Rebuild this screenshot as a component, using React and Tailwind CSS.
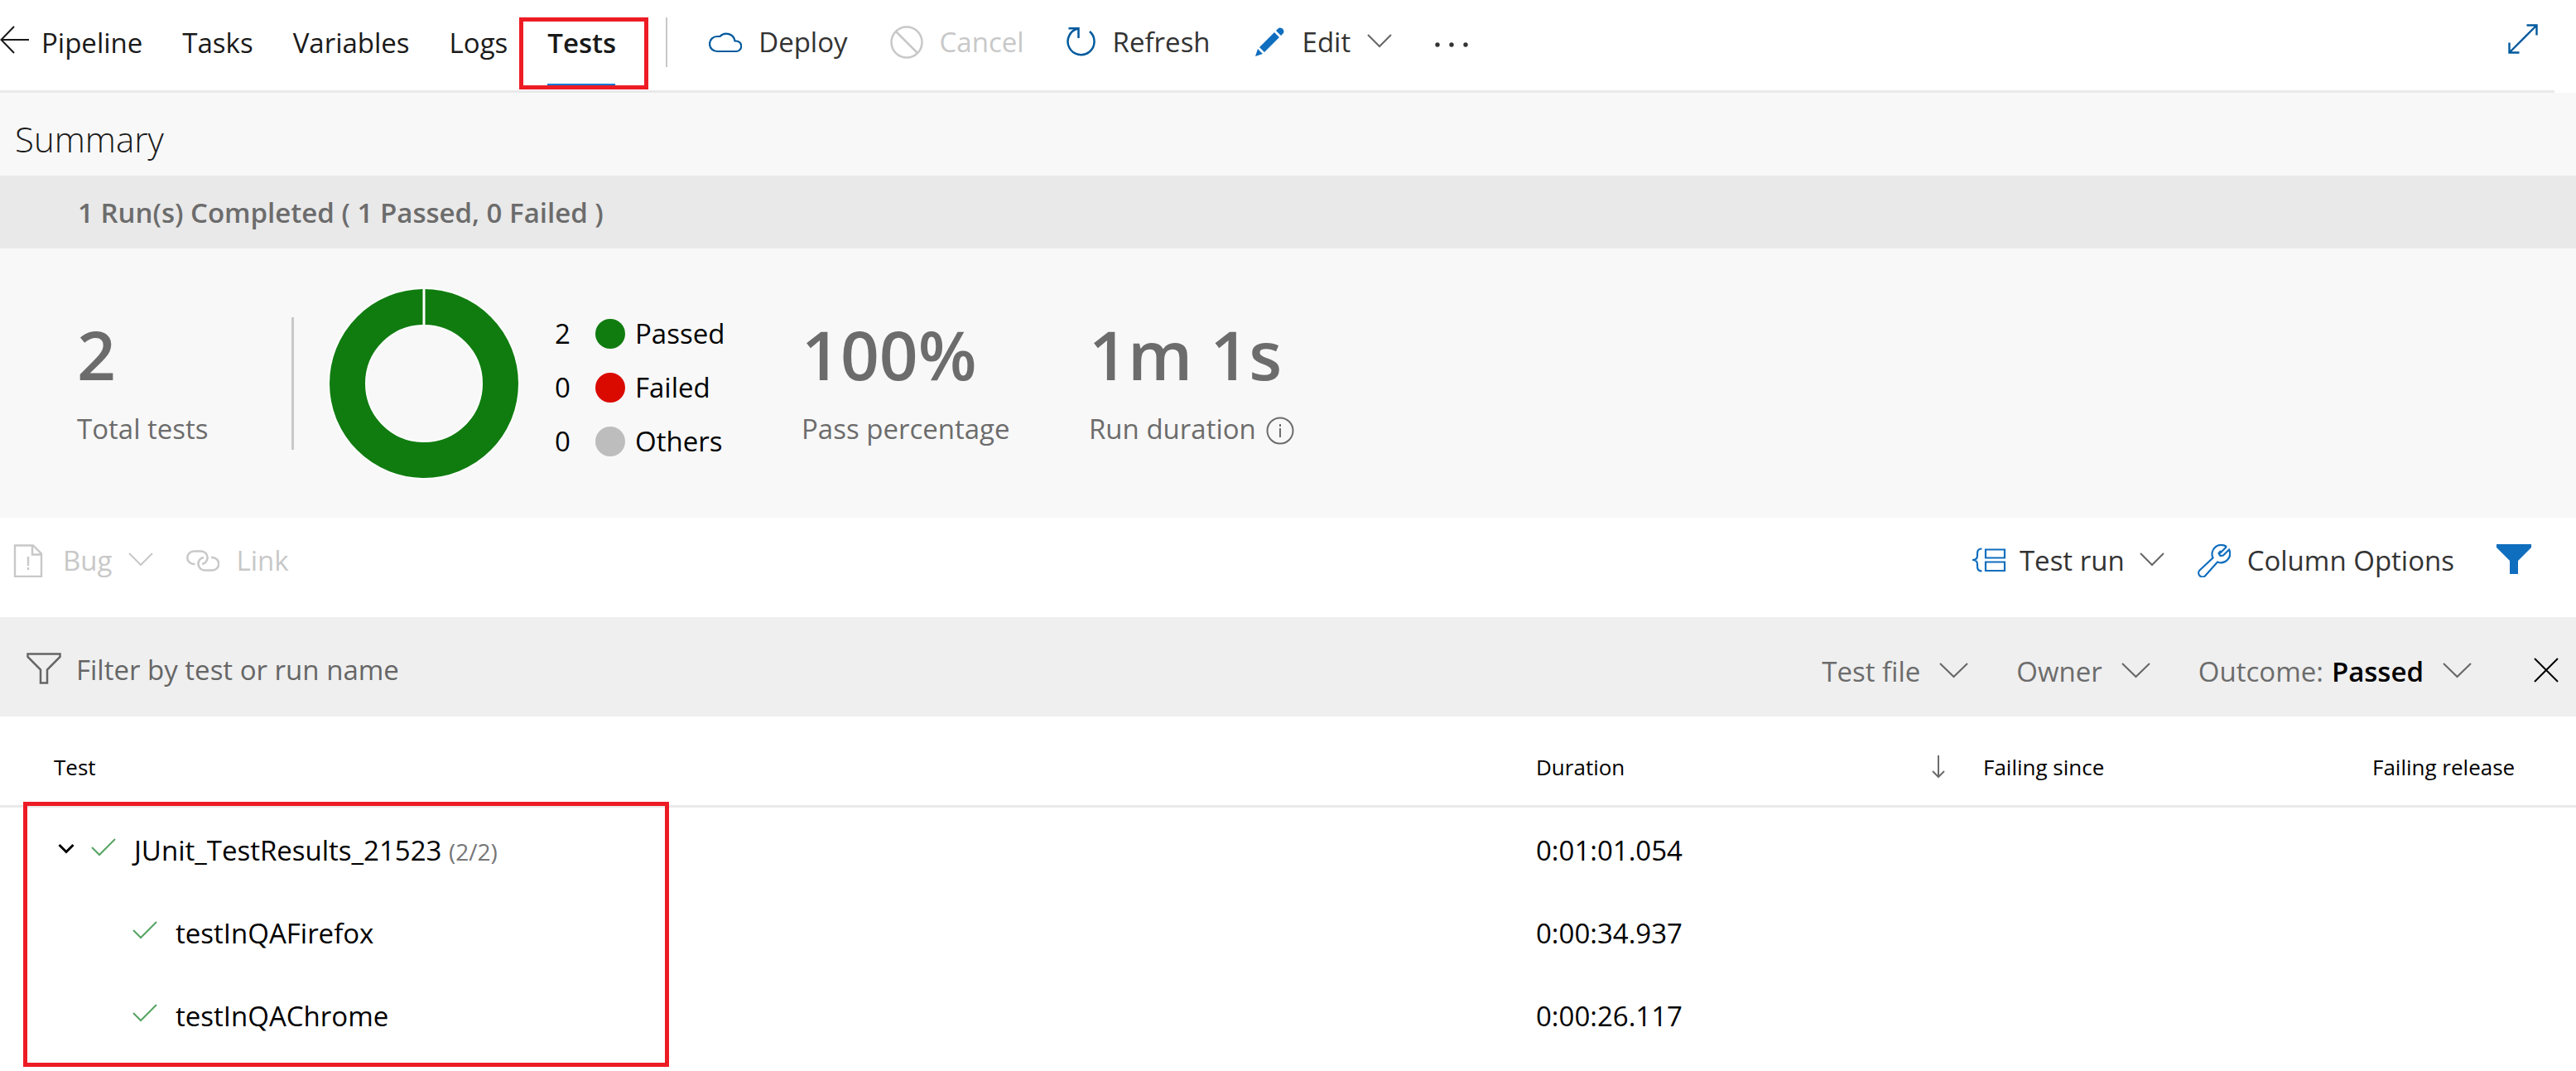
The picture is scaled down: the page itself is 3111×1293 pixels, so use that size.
function Icon({ w = 40, h = 40, sw = 2, className = "", children, fill = "none" }) {
  return (
    <svg
      width={w}
      height={h}
      viewBox={`0 0 ${w} ${h}`}
      fill={fill}
      stroke={fill === "none" ? "currentColor" : "none"}
      strokeWidth={sw}
      className={`shrink-0 ${className}`}
      aria-hidden="true"
    >
      {children}
    </svg>
  );
}

const Chevron = ({ className = "" }) => (
  <Icon w={30} h={18} sw={2} className={className}>
    <path d="M1 2 15 16 29 2" />
  </Icon>
);

const WideChevron = ({ className = "" }) => (
  <Icon w={35} h={20} sw={2} className={className}>
    <path d="M1 2 17.500 18 34 2" />
  </Icon>
);

const Check = () => (
  <Icon w={30} h={24} sw={2} className="mb-2 text-[#55a362]">
    <path d="M1 12 10 21 29 2" />
  </Icon>
);

const navLinks = ["Pipeline", "Tasks", "Variables", "Logs"];

function Command({ icon, label, tone = "text-[#333333]", menu = false, disabled = false }) {
  return (
    <button type="button" disabled={disabled} className={`flex items-center gap-5 ${tone}`}>
      {icon}
      {label}
      {menu && <Chevron className={disabled ? "mb-1" : "mb-1 text-[#666666]"} />}
    </button>
  );
}

function TopBar() {
  return (
    <header className="mr-[26px] flex items-center justify-between border-b-3 border-[#e9e9e9] pb-[7px]">
      <div className="flex h-[102px] items-center">
        <nav className="flex items-center gap-12 pt-0.5 text-[#1a1a1a]">
          {navLinks.map((name, i) => (
            <a key={name} href={`#${name.toLowerCase()}`} className="flex items-center gap-[14px]">
              {i === 0 && (
                <Icon w={36} h={36} className="mb-2">
                  <path d="M17 2 1.500 18 17 34M1.500 18H35" />
                </Icon>
              )}
              {name}
            </a>
          ))}
          <a href="#tests" aria-current="page" className="relative font-semibold">
            Tests
            <span className="absolute -bottom-8 left-0 h-[5px] w-[82px] bg-[#0078d4]" />
            <span className="absolute -top-[9px] -right-[39px] -bottom-[34px] -left-[34px] border-5 border-[#ed1c24]" />
          </a>
        </nav>
        <div className="ml-[60px] h-[60px] w-0.5 bg-[#c8c8c8]" />
        <div className="ml-[50px] flex items-center gap-[51px]">
          <Command
            label="Deploy"
            icon={
              <Icon sw={2.2} className="text-[#005a9e]">
                <path d="M10 31a9 9 0 0 1 0-18h3.500A10.500 10.500 0 0 1 31.500 18.500h1.500a6.250 6.250 0 0 1 0 12.500Z" />
              </Icon>
            }
          />
          <Command
            label="Cancel"
            tone="text-[#c8c8c8]"
            disabled
            icon={
              <Icon sw={2.5}>
                <circle cx="20" cy="20" r="18.500" />
                <path d="M7 7 33 33" />
              </Icon>
            }
          />
          <Command
            label="Refresh"
            icon={
              <Icon sw={2.5} className="-mr-1 text-[#005a9e]">
                <path d="M13 3.800A16 16 0 1 0 28 7M2.500 3.200H14.500V15" />
              </Icon>
            }
          />
          <Command
            label="Edit"
            menu
            icon={
              <Icon fill="#106ebe">
                <path d="M3 37 6 28 12 34ZM8 26 26 8 32 14 14 32ZM28 6 30.500 3.500A3.500 3.500 0 0 1 33 2.500 5 5 0 0 1 37.500 7 3.500 3.500 0 0 1 36.500 9.500L34 12Z" />
              </Icon>
            }
          />
          <button type="button" aria-label="More commands" className="text-[#333333]">
            <Icon w={42} h={10} fill="currentColor" className="mt-1">
              <circle cx="4" cy="6" r="2.700" />
              <circle cx="21" cy="6" r="2.700" />
              <circle cx="38" cy="6" r="2.700" />
            </Icon>
          </button>
        </div>
      </div>
      <button type="button" aria-label="Full screen" className="mr-5 text-[#005a9e]">
        <Icon w={36} h={36} sw={2.4} className="mb-2">
          <path d="M2 34 34 2M22.500 1.500H34.500V13.500M1.500 22.500V34.500H13.500" />
        </Icon>
      </button>
    </header>
  );
}

function Metric({ value, label, children, className = "" }) {
  return (
    <div className={`flex flex-col gap-4 pb-1.5 text-[#6c6c6c] ${className}`}>
      <div className="text-[82px] leading-[100px] font-semibold">{value}</div>
      <div className="flex items-center gap-3 leading-[50px]">
        {label}
        {children}
      </div>
    </div>
  );
}

const legend = [
  { count: 2, label: "Passed", dot: "bg-[#107c10]" },
  { count: 0, label: "Failed", dot: "bg-[#da0a00]" },
  { count: 0, label: "Others", dot: "bg-[#bdbdbd]" },
];

function Summary() {
  return (
    <section className="bg-[#f8f8f8]">
      <h1 className="flex h-[100px] items-center pt-3 pl-[18px] text-[42px] font-light text-[#1a1a1a]">Summary</h1>
      <p className="flex h-[88px] items-center bg-[#e9e9e9] pt-0.5 pl-[94px] font-semibold text-[#6c6c6c]">
        1 Run(s) Completed ( 1 Passed, 0 Failed )
      </p>
      <div className="flex h-[325px] items-center pl-[93px]">
        <Metric value="2" label="Total tests" className="w-[259px]" />
        <div className="h-40 w-[3px] bg-[#c8c8c8]" />
        <svg width="232" height="232" viewBox="0 0 232 232" className="ml-[41px] shrink-0" role="img" aria-label="2 passed">
          <circle cx="116" cy="116" r="92.500" fill="none" stroke="#ffffff" strokeWidth="47" />
          <circle cx="116" cy="116" r="92.500" fill="none" stroke="#107c10" strokeWidth="43" />
          <path d="M116 0V48" stroke="#ffffff" strokeWidth="3" />
        </svg>
        <ul className="ml-[42px] w-[298px] pt-2.5 text-black">
          {legend.map((item) => (
            <li key={item.label} className="flex h-[65px] items-center">
              <span className="w-[49px]">{item.count}</span>
              <span className={`mr-3 size-9 rounded-full ${item.dot}`} />
              {item.label}
            </li>
          ))}
        </ul>
        <Metric value="100%" label="Pass percentage" className="w-[347px]" />
        <Metric value="1m 1s" label="Run duration">
          <Icon w={34} h={34} className="mt-1">
            <circle cx="17" cy="17" r="15.500" />
            <path d="M17 14V25M17 9V12" />
          </Icon>
        </Metric>
      </div>
    </section>
  );
}

function Picker({ prefix, value, name, tone = "", pad = "pr-[58px]", arrow: Arrow = WideChevron, className = "" }) {
  return (
    <label className={`flex items-center ${className}`}>
      {prefix && <span className="mr-2.5">{prefix}</span>}
      <span className="grid items-center">
        <select
          aria-label={name}
          className={`col-start-1 row-start-1 field-sizing-content appearance-none bg-transparent outline-none ${pad} ${tone}`}
        >
          <option>{value}</option>
        </select>
        <Arrow className="pointer-events-none col-start-1 row-start-1 mb-1 justify-self-end text-[#666666]" />
      </span>
    </label>
  );
}

function Toolbar() {
  return (
    <div className="flex h-[120px] items-center justify-between pr-[54px] pb-4 pl-4">
      <div className="flex items-center gap-10">
        <Command
          label="Bug"
          menu
          disabled
          tone="text-[#c8c8c8]"
          icon={
            <Icon sw={2.4}>
              <path d="M2 1.500H24L34 11.500V39H2ZM23 1.500V12.500H34M18 15V26M18 28V31" />
            </Icon>
          }
        />
        <Command
          label="Link"
          disabled
          tone="text-[#c8c8c8]"
          icon={
            <Icon sw={2.5}>
              <path d="M10.500 24H9A7.600 7.600 0 0 1 9 8.500H18A7.800 7.800 0 0 1 19 24M30 16H31.500A7.600 7.600 0 0 1 31.500 31.500H22A7.800 7.800 0 0 1 21 16" />
            </Icon>
          }
        />
      </div>
      <div className="flex items-center text-[#333333]">
        <Icon w={42} sw={2.2} className="mr-4 text-[#106ebe]">
          <path d="M12.500 5.500C8 5.500 7 8 7 11V14C7 17 5 19 1 19C5 19 7 21 7 24V27C7 30 8 32.500 12.500 32.500M17 6.500H40V16.500H17ZM17 21.500H40V32H17Z" />
        </Icon>
        <Picker value="Test run" name="Group by" pad="pr-12" arrow={Chevron} className="mr-10" />
        <Command
          label="Column Options"
          icon={
            <Icon sw={2.2} className="text-[#106ebe]">
              <path d="M35 3A11 11 0 0 0 18.500 16.500L2.500 31.500A4.700 4.700 0 0 0 9.300 38L24 21.500A11 11 0 0 0 38 6.500L31 13.500 27.500 14 25.500 11 28 8 M35 3 27 11" />
            </Icon>
          }
        />
        <button type="button" aria-label="Toggle filter" className="ml-[51px] text-[#106ebe]">
          <Icon w={42} h={36} fill="currentColor" className="mb-1">
            <path d="M0 0H42V4L26 20V36H16V20L0 4Z" />
          </Icon>
        </button>
      </div>
    </div>
  );
}

function FilterBar() {
  return (
    <div className="flex h-[120px] items-center bg-[#efefef] pt-2 pr-[21px] pl-8 text-[#6c6c6c]">
      <label className="flex flex-1 items-center gap-[18px]">
        <Icon w={42} h={38} sw={2.5} className="mb-1 text-[#666666]">
          <path d="M1.500 1.500H40.500V5L25 20.500V36.500H17V20.500L1.500 5Z" />
        </Icon>
        <input
          type="text"
          aria-label="Filter by test or run name"
          placeholder="Filter by test or run name"
          className="min-w-0 flex-1 bg-transparent outline-none placeholder:text-[#666666]"
        />
      </label>
      <div className="flex items-center gap-[58px] pt-1">
        <Picker value="Test file" name="Test file" />
        <Picker value="Owner" name="Owner" />
        <Picker prefix="Outcome:" value="Passed" name="Outcome" tone="font-semibold text-black" />
      </div>
      <button type="button" aria-label="Close filter" className="ml-[75px] text-black">
        <Icon w={30} h={30}>
          <path d="M1 1 29 29M29 1 1 29" />
        </Icon>
      </button>
    </div>
  );
}

const children = [
  { name: "testInQAFirefox", duration: "0:00:34.937" },
  { name: "testInQAChrome", duration: "0:00:26.117" },
];

const headCell = "h-[110px] border-b-3 border-[#e9e9e9] pt-3.5 font-normal";

function Results() {
  return (
    <div className="relative">
      <table className="w-full table-fixed border-separate border-spacing-0 text-left text-black">
        <colgroup>
          <col />
          <col className="w-[540px]" />
          <col className="w-[470px]" />
          <col className="w-[246px]" />
        </colgroup>
        <thead className="text-[26px]">
          <tr>
            <th className={`${headCell} pl-[65px]`}>Test</th>
            <th aria-sort="descending" className={headCell}>
              <button type="button" className="flex w-full items-center justify-between pr-[46px]">
                Duration
                <Icon w={16} h={28} className="text-[#6c6c6c]">
                  <path d="M8 0V26M1 19 8 26 15 19" />
                </Icon>
              </button>
            </th>
            <th className={headCell}>Failing since</th>
            <th className={headCell}>Failing release</th>
          </tr>
        </thead>
        <tbody>
          <tr className="h-[100px]">
            <td className="pt-1">
              <div className="flex items-center pl-[70px]">
                <button type="button" aria-label="Collapse" aria-expanded="true" className="mr-5">
                  <Icon w={20} h={14} sw={3} className="mb-1">
                    <path d="M1.500 2 10 10.500 18.500 2" />
                  </Icon>
                </button>
                <Check />
                <span className="ml-[22px]">
                  JUnit_TestResults_21523 <span className="text-[28px] text-[#767676]">(2/2)</span>
                </span>
              </div>
            </td>
            <td className="pt-1">0:01:01.054</td>
            <td />
            <td />
          </tr>
          {children.map((row) => (
            <tr key={row.name} className="h-[100px]">
              <td className="pt-1">
                <div className="flex items-center gap-[22px] pl-40">
                  <Check />
                  {row.name}
                </div>
              </td>
              <td className="pt-1">{row.duration}</td>
              <td />
              <td />
            </tr>
          ))}
        </tbody>
      </table>
      <div className="pointer-events-none absolute top-[103px] -bottom-[13px] left-7 w-[780px] border-5 border-[#ed1c24]" />
    </div>
  );
}

export default function App() {
  return (
    <main className="min-h-screen bg-white font-['Open_Sans','Noto_Sans',sans-serif] text-[33px] leading-[44px] whitespace-nowrap">
      <TopBar />
      <Summary />
      <Toolbar />
      <FilterBar />
      <Results />
    </main>
  );
}
